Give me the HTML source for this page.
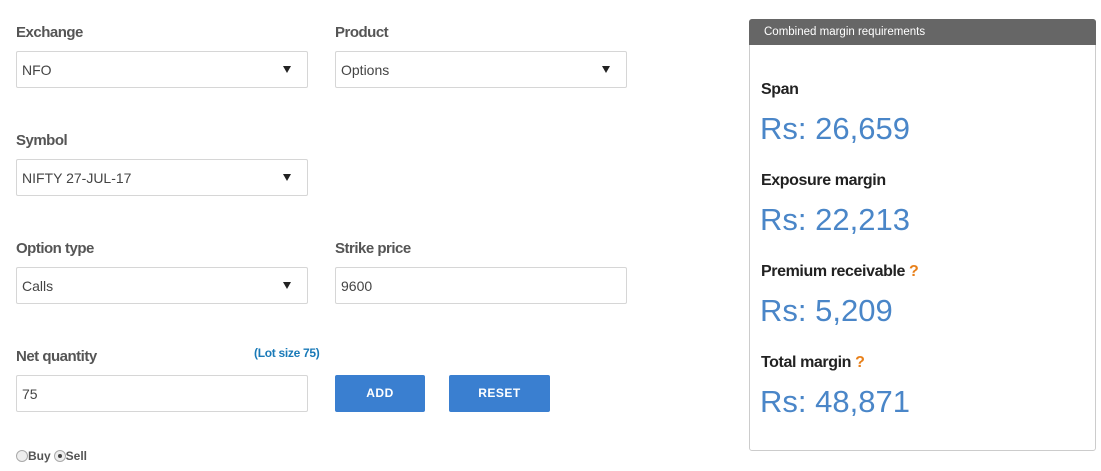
<!DOCTYPE html>
<html><head><style>
body{margin:0;width:1101px;height:471px;background:#fff;font-family:"Liberation Sans",sans-serif;position:relative;overflow:hidden}
.a{position:absolute}
.lbl{font-size:15px;color:#555;font-weight:bold;letter-spacing:-0.5px}
.box{border:1px solid #d6d6d6;border-radius:2px;box-sizing:border-box;height:37px;font-size:14px;color:#444;padding:0 5px;line-height:37px}
.arr{position:absolute;right:16px;top:14px;width:0;height:0;border-left:4px solid transparent;border-right:4px solid transparent;border-top:7px solid #222}
.btn{background:#3a7fd0;color:#fff;font-weight:bold;font-size:12px;text-align:center;line-height:37px;height:37px;border-radius:2px;letter-spacing:0.5px}
.h{font-size:16px;font-weight:bold;color:#222;left:761px;letter-spacing:-0.4px}
.v{font-size:31px;color:#4a86c8;left:760px}
.q{color:#e8801a}
</style></head><body>
<div class="a lbl" style="left:16px;top:24px">Exchange</div>
<div class="a box" style="left:16px;top:51px;width:292px">NFO<span class="arr"></span></div>
<div class="a lbl" style="left:335px;top:24px">Product</div>
<div class="a box" style="left:335px;top:51px;width:292px">Options<span class="arr"></span></div>
<div class="a lbl" style="left:16px;top:132px">Symbol</div>
<div class="a box" style="left:16px;top:159px;width:292px">NIFTY 27-JUL-17<span class="arr"></span></div>
<div class="a lbl" style="left:16px;top:240px">Option type</div>
<div class="a box" style="left:16px;top:267px;width:292px">Calls<span class="arr"></span></div>
<div class="a lbl" style="left:335px;top:240px">Strike price</div>
<div class="a box" style="left:335px;top:267px;width:292px">9600</div>
<div class="a lbl" style="left:16px;top:348px">Net quantity</div>
<div class="a" style="left:254px;top:346px;font-size:12px;font-weight:bold;color:#1a7ab8;letter-spacing:-0.3px">(Lot size 75)</div>
<div class="a box" style="left:16px;top:375px;width:292px">75</div>
<div class="a btn" style="left:335px;top:375px;width:90px">ADD</div>
<div class="a btn" style="left:449px;top:375px;width:101px">RESET</div>
<div class="a" style="left:16px;top:449px;font-size:12px;color:#555;font-weight:bold;display:flex;align-items:center">
<span style="width:10px;height:10px;border:1px solid #aaa;border-radius:50%;background:#eee;display:inline-block"></span>Buy
<span style="width:10px;height:10px;border:1px solid #aaa;border-radius:50%;background:#eee;display:inline-block;margin-left:3px;position:relative"><span style="position:absolute;left:3px;top:3px;width:4px;height:4px;border-radius:50%;background:#444"></span></span>Sell</div>
<div class="a" style="left:749px;top:19px;width:347px;height:432px;border:1px solid #ccc;box-sizing:border-box;border-radius:3px"></div>
<div class="a" style="left:749px;top:19px;width:347px;height:26px;background:#666;border-radius:3px 3px 0 0;color:#fff;font-size:11.5px;line-height:27px;padding-left:15px;box-sizing:border-box">Combined margin requirements</div>
<div class="a h" style="top:81px">Span</div>
<div class="a v" style="top:111px">Rs: 26,659</div>
<div class="a h" style="top:172px">Exposure margin</div>
<div class="a v" style="top:202px">Rs: 22,213</div>
<div class="a h" style="top:263px">Premium receivable <span class="q">?</span></div>
<div class="a v" style="top:293px">Rs: 5,209</div>
<div class="a h" style="top:354px">Total margin <span class="q">?</span></div>
<div class="a v" style="top:384px">Rs: 48,871</div>
</body></html>
